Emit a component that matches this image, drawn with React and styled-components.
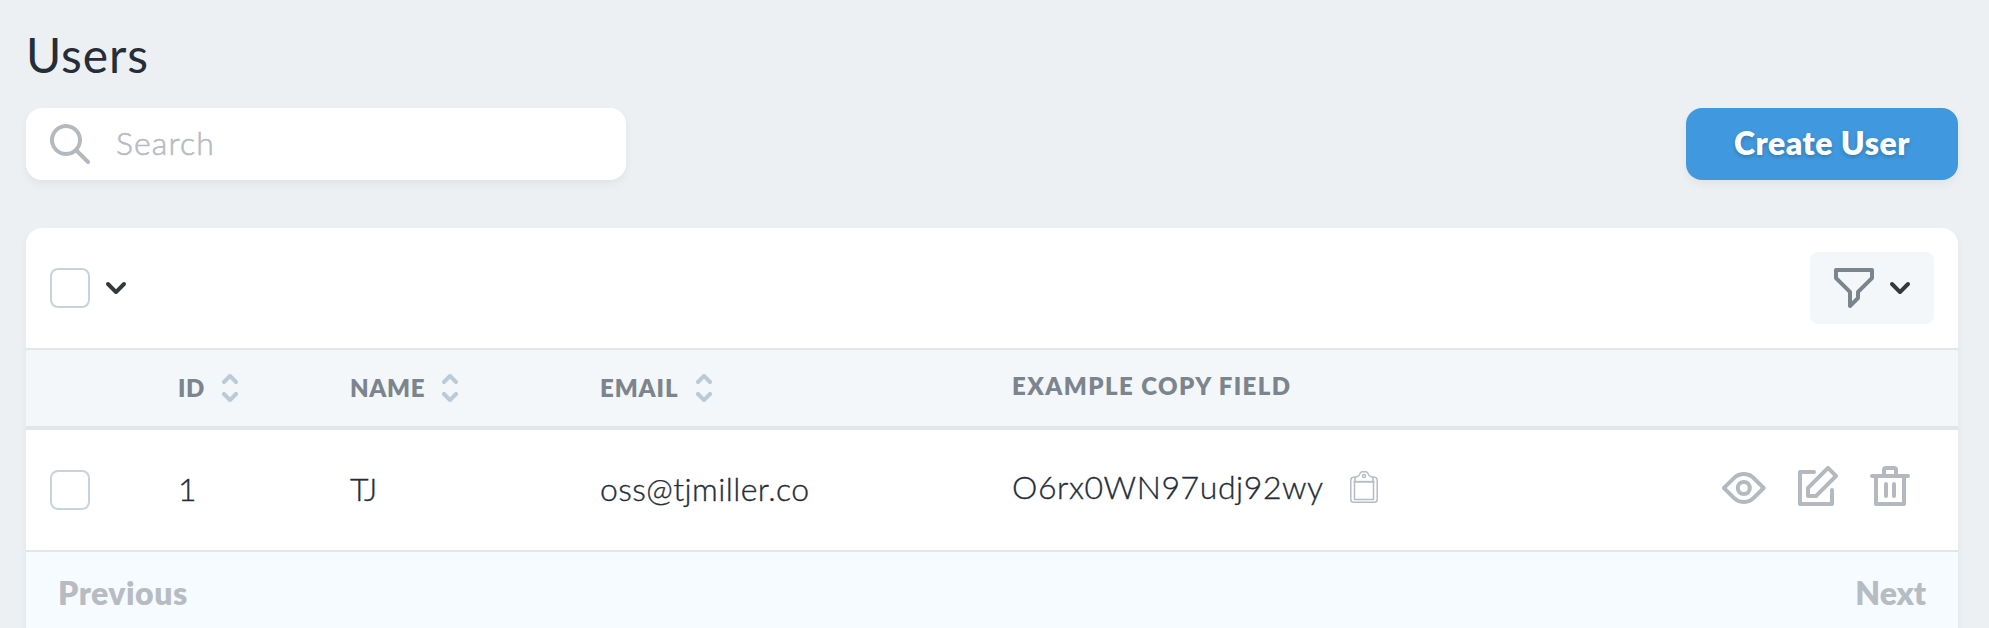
import React from "react";
import styled, { createGlobalStyle } from "styled-components";

const GlobalStyle = createGlobalStyle`
  *, *::before, *::after { box-sizing: border-box; }
  html, body { margin: 0; height: 100%; overflow: hidden; }
  body {
    background: #ecf0f3;
    color: #252d37;
    font-family: Lato, "Open Sans", sans-serif;
    font-size: 32px;
    font-weight: 300;
    font-kerning: normal;
  }
  svg { display: block; flex: none; }
`;

const Page = styled.main`
  display: flex;
  flex-direction: column;
  height: 628px;
  padding: 26px 31px 0 26px;
  overflow: hidden;
`;

const Title = styled.h1`
  margin: 0 0 24px;
  font-size: 48px;
  font-weight: 400;
  line-height: 58px;
  letter-spacing: 0.9px;
`;

const Actions = styled.div`
  display: flex;
  flex: none;
  align-items: center;
  justify-content: space-between;
  height: 72px;
  margin-bottom: 48px;
`;

const SearchBox = styled.label`
  display: flex;
  align-items: center;
  gap: 26px;
  width: 600px;
  height: 72px;
  padding: 0 24px;
  border-radius: 16px;
  background: #fff;
  box-shadow: 0 4px 8px rgba(0, 0, 0, 0.05);
  color: #b3b9bf;
`;

const SearchInput = styled.input`
  flex: 1;
  min-width: 0;
  height: 72px;
  padding: 0 0 4px;
  border: 0;
  outline: 0;
  background: none;
  color: inherit;
  font: inherit;
  letter-spacing: 1.1px;
  &::placeholder {
    color: #b7bbc3;
    opacity: 1;
    -webkit-text-stroke: 0.6px #b7bbc3;
  }
`;

const CreateButton = styled.button`
  width: 272px;
  height: 72px;
  padding: 0 0 3px;
  border: 0;
  border-radius: 16px;
  background: #4099de;
  box-shadow: 0 4px 8px rgba(0, 0, 0, 0.05);
  color: #fff;
  font: inherit;
  font-weight: 800;
  letter-spacing: 0.5px;
  text-shadow: 0 2px 4px rgba(0, 0, 0, 0.22);
`;

const Card = styled.section`
  display: flex;
  flex: 1;
  flex-direction: column;
  border-radius: 16px 16px 0 0;
  background: #fff;
  box-shadow: 0 4px 8px rgba(0, 0, 0, 0.05);
`;

const Toolbar = styled.div`
  display: flex;
  flex: none;
  align-items: center;
  justify-content: space-between;
  height: 120px;
  padding: 0 24px;
`;

const SelectAll = styled.div`
  display: flex;
  align-items: center;
  gap: 16px;
  color: #35393c;
`;

const Checkbox = styled.span`
  display: block;
  flex: none;
  width: 40px;
  height: 40px;
  border: 2px solid #c8d3dc;
  border-radius: 8px;
  background: #fff;
`;

const FilterButton = styled.button`
  display: flex;
  align-items: center;
  gap: 16px;
  width: 124px;
  height: 72px;
  padding: 0 24px;
  border: 0;
  border-radius: 8px;
  background: #f3f7fa;
  color: #35393c;
`;

const Row = styled.div`
  display: grid;
  flex: none;
  grid-template-columns: 128px 172px 250px 412px 1fr 250px;
  align-items: center;
`;

const HeaderRow = styled(Row)`
  height: 82px;
  border-top: 2px solid #e2e6ea;
  border-bottom: 4px solid #e2e6ea;
  background: #f3f7fa;
  color: #7c858e;
  font-size: 24px;
  font-weight: 800;
  text-transform: uppercase;
`;

const BodyRow = styled(Row)`
  height: 120px;
`;

const Cell = styled.div`
  display: flex;
  align-items: center;
  padding-left: 24px;
  white-space: nowrap;
`;

const Heading = styled.span`
  width: ${(p) => p.$width || "auto"};
  padding-bottom: ${(p) => p.$lift || 1}px;
  letter-spacing: ${(p) => p.$spacing}px;
`;

const Value = styled.span`
  padding-bottom: ${(p) => p.$lift || 4}px;
  letter-spacing: ${(p) => p.$spacing || 0}px;
  -webkit-text-stroke: 0.35px currentColor;
`;

const CopyIcon = styled.span`
  padding: 0 0 7px 26px;
`;

const RowActions = styled.div`
  display: flex;
  align-items: center;
  justify-content: flex-end;
  gap: 32px;
  padding: 0 48px 8px 0;
  color: #b3b9bf;
`;

const EyeSlot = styled.span`
  padding-top: 3px;
`;

const Pagination = styled.nav`
  display: flex;
  flex: 1;
  align-items: flex-start;
  justify-content: space-between;
  padding: 21px 32px 0;
  border-top: 2px solid #e2e6ea;
  background: #f6fbff;
  color: #b7bcc3;
  font-weight: 800;
  line-height: 39px;
`;

const PageLink = styled.span`
  letter-spacing: ${(p) => p.$spacing}px;
`;

const Icon = ({ w, h, scale = 2, color = "currentColor", children }) => (
  <svg width={w * scale} height={h * scale} viewBox={`0 0 ${w} ${h}`} fill={color} aria-hidden="true">
    {children}
  </svg>
);

const SearchIcon = () => (
  <Icon w={20} h={20}>
    <path fillRule="nonzero" d="M14.32 12.906l5.387 5.387a1 1 0 0 1-1.414 1.414l-5.387-5.387a8 8 0 1 1 1.414-1.414zM8 14A6 6 0 1 0 8 2a6 6 0 0 0 0 12z" />
  </Icon>
);

const Chevron = () => (
  <Icon w={10} h={6}>
    <path d="M8.292893.292893c.390525-.390524 1.023689-.390524 1.414214 0 .390524.390525.390524 1.023689 0 1.414214l-4 4c-.390525.390524-1.023689.390524-1.414214 0l-4-4c-.390524-.390525-.390524-1.023689 0-1.414214.390525-.390524 1.023689-.390524 1.414214 0L5 3.585786 8.292893.292893z" />
  </Icon>
);

const FilterIcon = () => (
  <Icon w={20} h={20} color="#7c858e">
    <path fillRule="evenodd" d="M.293 5.707A1 1 0 0 1 0 4.999V1A1 1 0 0 1 1 0h18a1 1 0 0 1 1 1v4a1 1 0 0 1-.293.707L13 12.413v2.585a1 1 0 0 1-.293.708l-4 4c-.63.629-1.707.183-1.707-.708v-6.585L.293 5.707zM2 2v2.585l6.707 6.707a1 1 0 0 1 .293.707v4.585l2-2V12a1 1 0 0 1 .293-.707L18 4.585V2H2z" />
  </Icon>
);

const SortIcon = () => (
  <Icon w={8} h={14} color="#bacad6">
    <path d="M1.707 4.707a1 1 0 0 1-1.414-1.414l3-3a1 1 0 0 1 1.414 0l3 3a1 1 0 0 1-1.414 1.414L4 2.414 1.707 4.707zM6.293 9.293a1 1 0 1 1 1.414 1.414l-3 3a1 1 0 0 1-1.414 0l-3-3a1 1 0 1 1 1.414-1.414L4 11.586l2.293-2.293z" />
  </Icon>
);

const ClipboardIcon = () => (
  <svg width="28" height="32" viewBox="0 0 28 32" fill="none" stroke="#b7bcc4" strokeWidth="1.5" aria-hidden="true">
    <path d="M5 6.2H3.6A2.8 2.8 0 0 0 .8 9v19.400a2.800 2.800 0 0 0 2.800 2.800h20.800a2.800 2.800 0 0 0 2.800-2.800V9a2.800 2.800 0 0 0-2.800-2.800H23" />
    <path d="M5 10.800V6.500l3.500-1.600C10 4.400 9.600.8 12 .8h4c2.400 0 2 3.600 3.500 4.100L23 6.500v4.300" />
    <path d="M3.500 10.800h21" strokeWidth="1.900" />
    <path d="M4.500 10.800V28.500h19V10.800" />
    <circle cx="14" cy="5" r="1.600" />
  </svg>
);

const EyeIcon = () => (
  <Icon w={22} h={16}>
    <path d="M16.56 13.66a8 8 0 0 1-11.32 0L.3 8.7a1 1 0 0 1 0-1.42l4.95-4.95a8 8 0 0 1 11.32 0l4.95 4.95a1 1 0 0 1 0 1.42l-4.95 4.95-.01.01zm-9.9-1.42a6 6 0 0 0 8.48 0L19.38 8l-4.24-4.24a6 6 0 0 0-8.48 0L2.4 8l4.25 4.24h.01zM10.9 12a4 4 0 1 1 0-8 4 4 0 0 1 0 8zm0-2a2 2 0 1 0 0-4 2 2 0 0 0 0 4z" />
  </Icon>
);

const EditIcon = () => (
  <Icon w={20} h={20}>
    <path d="M4.3 10.3l10-10a1 1 0 0 1 1.4 0l4 4a1 1 0 0 1 0 1.4l-10 10a1 1 0 0 1-.7.3H5a1 1 0 0 1-1-1v-4a1 1 0 0 1 .3-.7zM6 14h2.590l9-9L15 2.410l-9 9V14zm10-2a1 1 0 0 1 2 0v7a1 1 0 0 1-1 1H1a1 1 0 0 1-1-1V3a1 1 0 0 1 1-1h7a1 1 0 1 1 0 2H2v14h14v-6z" />
  </Icon>
);

const TrashIcon = () => (
  <Icon w={20} h={20}>
    <path d="M6 4V2a2 2 0 0 1 2-2h4a2 2 0 0 1 2 2v2h5a1 1 0 0 1 0 2h-1v13a1 1 0 0 1-1 1H3a1 1 0 0 1-1-1V6H1a1 1 0 1 1 0-2h5zM4 6v12h12V6H4zm8-2V2H8v2h4zM8 8a1 1 0 0 1 1 1v6a1 1 0 0 1-2 0V9a1 1 0 0 1 1-1zm4 0a1 1 0 0 1 1 1v6a1 1 0 0 1-2 0V9a1 1 0 0 1 1-1z" />
  </Icon>
);

const sortable = [
  { label: "ID", width: "44px", spacing: 0.5 },
  { label: "Name", width: "92px", spacing: 0.7 },
  { label: "Email", width: "96px", spacing: 0.9 },
];

export default function App() {
  return (
    <>
      <GlobalStyle />
      <Page>
        <Title>Users</Title>
        <Actions>
          <SearchBox>
            <SearchIcon />
            <SearchInput placeholder="Search" />
          </SearchBox>
          <CreateButton>Create User</CreateButton>
        </Actions>
        <Card>
          <Toolbar>
            <SelectAll>
              <Checkbox />
              <Chevron />
            </SelectAll>
            <FilterButton>
              <FilterIcon />
              <Chevron />
            </FilterButton>
          </Toolbar>
          <HeaderRow>
            <Cell />
            {sortable.map((col) => (
              <Cell key={col.label}>
                <Heading $width={col.width} $spacing={col.spacing}>{col.label}</Heading>
                <SortIcon />
              </Cell>
            ))}
            <Cell>
              <Heading $spacing={1.45} $lift={5}>Example Copy Field</Heading>
            </Cell>
          </HeaderRow>
          <BodyRow>
            <Cell>
              <Checkbox />
            </Cell>
            <Cell>
              <Value>1</Value>
            </Cell>
            <Cell>
              <Value $spacing={-2}>TJ</Value>
            </Cell>
            <Cell>
              <Value $spacing={0.4}>oss@tjmiller.co</Value>
            </Cell>
            <Cell>
              <Value $spacing={0.57} $lift={8}>O6rx0WN97udj92wy</Value>
              <CopyIcon>
                <ClipboardIcon />
              </CopyIcon>
            </Cell>
            <RowActions>
              <EyeSlot>
                <EyeIcon />
              </EyeSlot>
              <EditIcon />
              <TrashIcon />
            </RowActions>
          </BodyRow>
          <Pagination>
            <PageLink $spacing={0.5}>Previous</PageLink>
            <PageLink $spacing={-0.1}>Next</PageLink>
          </Pagination>
        </Card>
      </Page>
    </>
  );
}
